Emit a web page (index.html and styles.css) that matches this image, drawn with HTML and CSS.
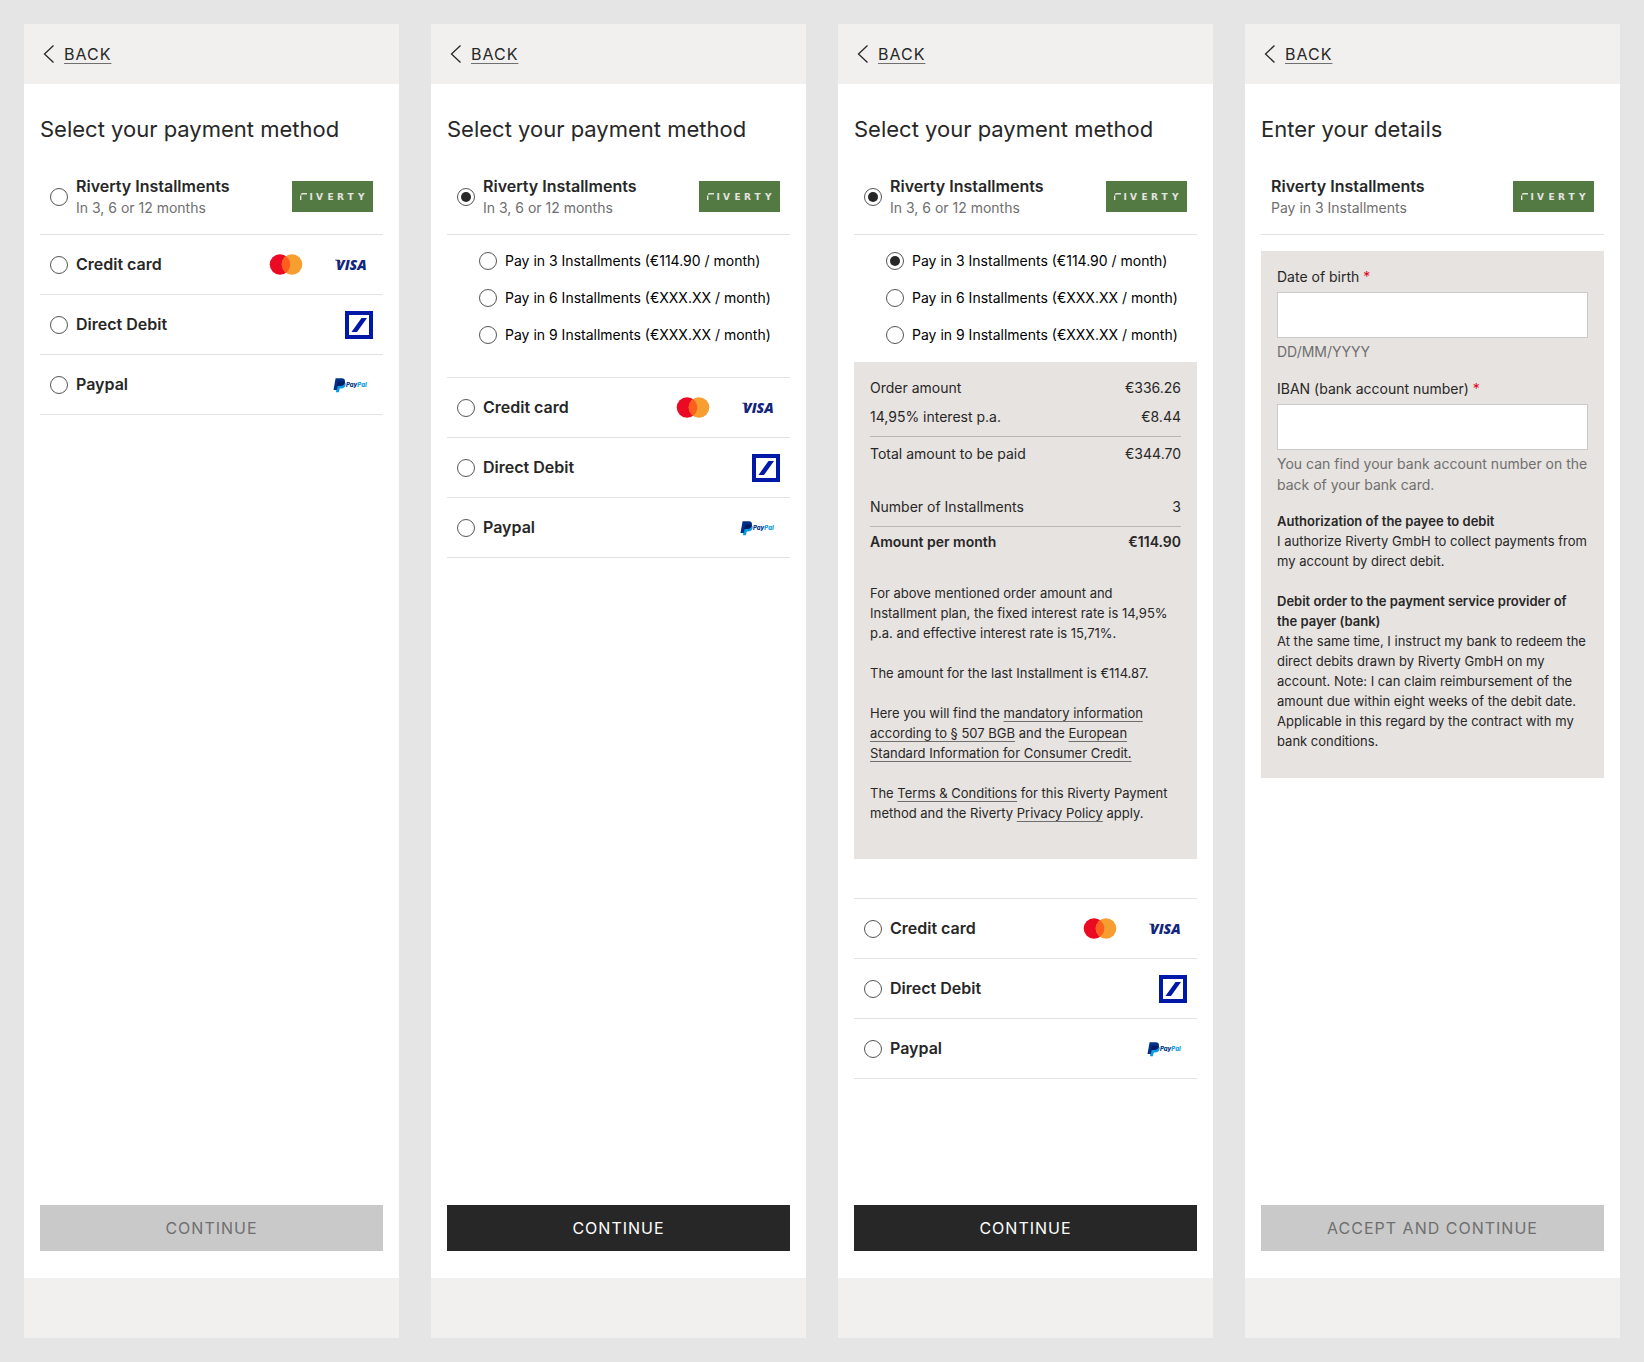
FILE: index.html
```html
<!DOCTYPE html>
<html lang="en">
<head>
    <meta charset="UTF-8">
    <meta name="viewport" content="width=device-width, initial-scale=1.0">
    <title>Riverty Installments</title>
    <link rel="stylesheet" href="styles.css">
</head>
<body>
    <!-- logos shared by all screens -->
    <svg class="sprite" aria-hidden="true">
        <symbol id="riverty" viewBox="0 0 81 31">
            <rect width="81" height="31" fill="#527a42"/>
            <path d="M8.700 19v-4.500M9 13.500L10.300 12.700H15" fill="none" stroke="#e7e3e0" stroke-width="1.400"/>
            <text class="riverty-text" x="17.500 24 35.500 45 55.500 66" y="19">IVERTY</text>
        </symbol>
        <symbol id="mastercard" viewBox="0 0 45 30">
            <circle cx="17" cy="14.500" r="10.300" fill="#eb0a23"/>
            <circle cx="29" cy="14.500" r="10.300" fill="#f79e31"/>
            <path d="M23 6.130a10.300 10.300 0 0 1 0 16.740a10.300 10.300 0 0 1 0-16.740z" fill="#ff5f1e"/>
        </symbol>
        <symbol id="visa" viewBox="0 0 45 30">
            <path d="M7 9.800h4.500l1.500 4C11.500 11.800 9.500 10.600 7 10.200z" fill="#171c55"/>
            <text class="visa-text" x="8" y="20">VISA</text>
        </symbol>
        <symbol id="db" viewBox="0 0 28 28">
            <rect x="2" y="2" width="24" height="24" fill="#fff" stroke="#0018a8" stroke-width="4"/>
            <path d="M6.500 21h5.500l10-14h-5.500z" fill="#0018a8"/>
        </symbol>
        <symbol id="paypal" viewBox="0 0 45 30">
            <path d="M9 11.500h5.500c2.500 0 3.500 1.500 3 3.700c-.5 2.400-2.200 3.300-4.500 3.300h-1.300l-.8 3.700H8z" fill="#0a9be0"/>
            <path d="M7.600 8.200h6c2.600 0 3.800 1.500 3.300 3.900c-.6 2.700-2.300 3.900-4.900 3.900H9.700l-.9 4H5.500z" fill="#003087"/>
            <path d="M9.900 11.500h4.600c1.200 0 1.900.3 2.400.8c-.6 2.600-2.300 3.700-4.900 3.700H9z" fill="#001c64"/>
            <text class="paypal-text" x="18" y="17" fill="#003087">Pay<tspan fill="#0a9be0">Pal</tspan></text>
        </symbol>
    </svg>

    <main class="screens">
        <!-- 1: nothing selected -->
        <section class="screen">
            <header class="top-bar">
                <a class="back" href="#">
                    <svg class="back-icon" viewBox="0 0 12 20" aria-hidden="true"><path d="M10.500 1.500L1.500 10L10.500 18.500"/></svg>
                    <span class="back-text">BACK</span>
                </a>
            </header>
            <form class="content">
                <h1 class="title">Select your payment method</h1>
                <label class="method method-main">
                    <input class="radio" type="radio" name="m1">
                    <span class="method-text">
                        <span class="method-name">Riverty Installments</span>
                        <span class="method-sub">In 3, 6 or 12 months</span>
                    </span>
                    <svg class="logo-riverty" role="img" aria-label="Riverty"><use href="#riverty"/></svg>
                </label>
                <label class="method">
                    <input class="radio" type="radio" name="m1">
                    <span class="method-name">Credit card</span>
                    <span class="logos">
                        <svg class="logo" role="img" aria-label="Mastercard"><use href="#mastercard"/></svg>
                        <svg class="logo" role="img" aria-label="Visa"><use href="#visa"/></svg>
                    </span>
                </label>
                <label class="method">
                    <input class="radio" type="radio" name="m1">
                    <span class="method-name">Direct Debit</span>
                    <svg class="logo-db" role="img" aria-label="Deutsche Bank"><use href="#db"/></svg>
                </label>
                <label class="method">
                    <input class="radio" type="radio" name="m1">
                    <span class="method-name">Paypal</span>
                    <svg class="logo" role="img" aria-label="PayPal"><use href="#paypal"/></svg>
                </label>
                <button class="btn" type="submit" disabled>CONTINUE</button>
            </form>
            <footer class="bottom-bar"></footer>
        </section>

        <!-- 2: Riverty selected -->
        <section class="screen">
            <header class="top-bar">
                <a class="back" href="#">
                    <svg class="back-icon" viewBox="0 0 12 20" aria-hidden="true"><path d="M10.500 1.500L1.500 10L10.500 18.500"/></svg>
                    <span class="back-text">BACK</span>
                </a>
            </header>
            <form class="content">
                <h1 class="title">Select your payment method</h1>
                <label class="method method-main">
                    <input class="radio" type="radio" name="m2" checked>
                    <span class="method-text">
                        <span class="method-name">Riverty Installments</span>
                        <span class="method-sub">In 3, 6 or 12 months</span>
                    </span>
                    <svg class="logo-riverty" role="img" aria-label="Riverty"><use href="#riverty"/></svg>
                </label>
                <div class="plans">
                    <label class="plan"><input class="radio" type="radio" name="p2"> Pay in 3 Installments (€114.90 / month)</label>
                    <label class="plan"><input class="radio" type="radio" name="p2"> Pay in 6 Installments (€XXX.XX / month)</label>
                    <label class="plan"><input class="radio" type="radio" name="p2"> Pay in 9 Installments (€XXX.XX / month)</label>
                </div>
                <div class="others">
                    <label class="method">
                        <input class="radio" type="radio" name="m2">
                        <span class="method-name">Credit card</span>
                        <span class="logos">
                            <svg class="logo" role="img" aria-label="Mastercard"><use href="#mastercard"/></svg>
                            <svg class="logo" role="img" aria-label="Visa"><use href="#visa"/></svg>
                        </span>
                    </label>
                    <label class="method">
                        <input class="radio" type="radio" name="m2">
                        <span class="method-name">Direct Debit</span>
                        <svg class="logo-db" role="img" aria-label="Deutsche Bank"><use href="#db"/></svg>
                    </label>
                    <label class="method">
                        <input class="radio" type="radio" name="m2">
                        <span class="method-name">Paypal</span>
                        <svg class="logo" role="img" aria-label="PayPal"><use href="#paypal"/></svg>
                    </label>
                </div>
                <button class="btn" type="submit">CONTINUE</button>
            </form>
            <footer class="bottom-bar"></footer>
        </section>

        <!-- 3: plan selected -->
        <section class="screen">
            <header class="top-bar">
                <a class="back" href="#">
                    <svg class="back-icon" viewBox="0 0 12 20" aria-hidden="true"><path d="M10.500 1.500L1.500 10L10.500 18.500"/></svg>
                    <span class="back-text">BACK</span>
                </a>
            </header>
            <form class="content">
                <h1 class="title">Select your payment method</h1>
                <label class="method method-main">
                    <input class="radio" type="radio" name="m3" checked>
                    <span class="method-text">
                        <span class="method-name">Riverty Installments</span>
                        <span class="method-sub">In 3, 6 or 12 months</span>
                    </span>
                    <svg class="logo-riverty" role="img" aria-label="Riverty"><use href="#riverty"/></svg>
                </label>
                <div class="plans">
                    <label class="plan"><input class="radio" type="radio" name="p3" checked> Pay in 3 Installments (€114.90 / month)</label>
                    <label class="plan"><input class="radio" type="radio" name="p3"> Pay in 6 Installments (€XXX.XX / month)</label>
                    <label class="plan"><input class="radio" type="radio" name="p3"> Pay in 9 Installments (€XXX.XX / month)</label>
                </div>
                <div class="box box-summary">
                    <table class="summary">
                        <tr><th scope="row">Order amount</th><td>€336.26</td></tr>
                        <tr class="line"><th scope="row">14,95% interest p.a.</th><td>€8.44</td></tr>
                        <tr class="sum"><th scope="row">Total amount to be paid</th><td>€344.70</td></tr>
                        <tr class="line"><th scope="row">Number of Installments</th><td>3</td></tr>
                        <tr class="monthly"><th scope="row">Amount per month</th><td>€114.90</td></tr>
                    </table>
                    <div class="legal">
                        <p>For above mentioned order amount and Installment plan, the fixed interest rate is 14,95% p.a. and effective interest rate is 15,71%.</p>
                        <p>The amount for the last Installment is €114.87.</p>
                        <p>Here you will find the <a href="#">mandatory information according to § 507 BGB</a> and the <a href="#">European Standard Information for Consumer Credit.</a></p>
                        <p>The <a href="#">Terms &amp; Conditions</a> for this Riverty Payment method and the Riverty <a href="#">Privacy Policy</a> apply.</p>
                    </div>
                </div>
                <div class="others others-far">
                    <label class="method">
                        <input class="radio" type="radio" name="m3">
                        <span class="method-name">Credit card</span>
                        <span class="logos">
                            <svg class="logo" role="img" aria-label="Mastercard"><use href="#mastercard"/></svg>
                            <svg class="logo" role="img" aria-label="Visa"><use href="#visa"/></svg>
                        </span>
                    </label>
                    <label class="method">
                        <input class="radio" type="radio" name="m3">
                        <span class="method-name">Direct Debit</span>
                        <svg class="logo-db" role="img" aria-label="Deutsche Bank"><use href="#db"/></svg>
                    </label>
                    <label class="method">
                        <input class="radio" type="radio" name="m3">
                        <span class="method-name">Paypal</span>
                        <svg class="logo" role="img" aria-label="PayPal"><use href="#paypal"/></svg>
                    </label>
                </div>
                <button class="btn" type="submit">CONTINUE</button>
            </form>
            <footer class="bottom-bar"></footer>
        </section>

        <!-- 4: customer details -->
        <section class="screen">
            <header class="top-bar">
                <a class="back" href="#">
                    <svg class="back-icon" viewBox="0 0 12 20" aria-hidden="true"><path d="M10.500 1.500L1.500 10L10.500 18.500"/></svg>
                    <span class="back-text">BACK</span>
                </a>
            </header>
            <form class="content">
                <h1 class="title">Enter your details</h1>
                <div class="method method-main">
                    <span class="method-text">
                        <span class="method-name">Riverty Installments</span>
                        <span class="method-sub">Pay in 3 Installments</span>
                    </span>
                    <svg class="logo-riverty" role="img" aria-label="Riverty"><use href="#riverty"/></svg>
                </div>
                <div class="box box-details">
                    <div class="field">
                        <label for="birth">Date of birth <span class="required">*</span></label>
                        <input class="field-input" id="birth" type="text">
                        <div class="hint">DD/MM/YYYY</div>
                    </div>
                    <div class="field">
                        <label for="iban">IBAN (bank account number) <span class="required">*</span></label>
                        <input class="field-input" id="iban" type="text">
                        <div class="hint">You can find your bank account number on the back of your bank card.</div>
                    </div>
                    <div class="legal">
                        <p><strong>Authorization of the payee to debit</strong><br>I authorize Riverty GmbH to collect payments from my account by direct debit.</p>
                        <p><strong>Debit order to the payment service provider of the payer (bank)</strong><br>At the same time, I instruct my bank to redeem the direct debits drawn by Riverty GmbH on my account. Note: I can claim reimbursement of the amount due within eight weeks of the debit date. Applicable in this regard by the contract with my bank conditions.</p>
                    </div>
                </div>
                <button class="btn" type="submit" disabled>ACCEPT AND CONTINUE</button>
            </form>
            <footer class="bottom-bar"></footer>
        </section>
    </main>
</body>
</html>
```
FILE: styles.css
```css
* {
    box-sizing: border-box;
}
body {
    margin: 0;
    font-family: Inter, "Liberation Sans", sans-serif;
    font-size: 14px;
    line-height: 21px;
    color: #272727;
    background: #e5e5e5;
}
.sprite {
    display: none;
}
.screens {
    display: grid;
    grid-template-columns: repeat(auto-fit, minmax(340px, 1fr));
    gap: 32px;
    min-height: 100vh;
    padding: 24px;
}
.screen {
    display: flex;
    flex-direction: column;
    background: #fff;
}
.top-bar {
    display: flex;
    align-items: center;
    height: 60px;
    padding: 0 19px;
    background: #f1f0ee;
}
.back {
    display: flex;
    align-items: center;
    gap: 9px;
    color: #272727;
    font-size: 16px;
    text-decoration: none;
}
.back-icon {
    width: 12px;
    height: 20px;
    fill: none;
    stroke: #272727;
    stroke-width: 1.3;
}
.back-text {
    letter-spacing: 1px;
    text-decoration: underline 1px #6f6f6f;
    text-underline-offset: 3px;
}
.bottom-bar {
    height: 60px;
    background: #f1f0ee;
}
.content {
    flex: 1;
    display: flex;
    flex-direction: column;
    padding: 32px 16px 27px;
}
.title {
    margin: 0 0 17px;
    font-size: 22px;
    font-weight: 400;
    line-height: 26px;
}

/* payment methods */
.method {
    display: flex;
    align-items: center;
    gap: 8px;
    height: 60px;
    padding: 0 10px;
    border-bottom: 1px solid #e3e3e3;
}
.method-main {
    height: 76px;
}
.method-text {
    flex: 1;
    display: flex;
    flex-direction: column;
}
.method-name {
    flex: 1;
    font-size: 16px;
    font-weight: 600;
}
.method-sub {
    color: #6f6f6f;
}
.radio {
    appearance: none;
    display: flex;
    align-items: center;
    justify-content: center;
    flex: none;
    width: 18px;
    height: 18px;
    margin: 0;
    border: 1px solid #555;
    border-radius: 50%;
    background: #fff;
}
.radio:checked::before {
    content: "";
    width: 10px;
    height: 10px;
    border-radius: 50%;
    background: #272727;
}
.plans {
    display: flex;
    flex-direction: column;
    gap: 16px;
    padding: 15px 0 17px 32px;
    color: #000;
}
.plan {
    display: flex;
    align-items: center;
    gap: 8px;
}
.others {
    margin-top: 15px;
    border-top: 1px solid #e3e3e3;
}
.others-far {
    margin-top: 39px;
}

/* logos */
.logos {
    display: flex;
    gap: 20px;
}
.logo {
    width: 45px;
    height: 30px;
}
.logo-riverty {
    width: 81px;
    height: 31px;
}
.logo-db {
    width: 28px;
    height: 28px;
}
.riverty-text {
    font: bold 9px "DejaVu Sans", sans-serif;
    fill: #e7e3e0;
}
.visa-text {
    font: italic 800 14px "Open Sans", sans-serif;
    fill: #11267c;
}
.paypal-text {
    font: italic 800 6px Inter, sans-serif;
}

/* grey boxes */
.box {
    padding: 15px 16px;
    background: #e7e3e0;
}
.box-summary {
    padding-bottom: 36px;
}
.box-details {
    margin-top: 16px;
    padding-bottom: 27px;
}
.summary {
    width: 100%;
    margin-bottom: 31px;
    border-collapse: separate;
    border-spacing: 0;
}
.summary th,
.summary td {
    padding: 0 0 8px;
    font-weight: 400;
    text-align: left;
}
.summary td {
    text-align: right;
}
.summary .line th,
.summary .line td {
    padding-bottom: 9px;
    border-bottom: 1px solid #b9b6b4;
}
.summary .sum th,
.summary .sum td {
    padding: 6px 0 32px;
}
.summary .monthly th,
.summary .monthly td {
    padding: 4px 0 0;
    font-weight: 600;
}
.legal {
    font-size: 13px;
    line-height: 20px;
}
.legal p {
    margin: 0 0 20px;
}
.legal p:last-child {
    margin-bottom: 0;
}
.legal strong {
    font-weight: 600;
}
.legal a {
    color: #272727;
    text-decoration-color: #6f6f6f;
    text-decoration-thickness: 1px;
    text-decoration-skip-ink: none;
    text-underline-offset: 3px;
}
.field {
    display: flex;
    flex-direction: column;
    margin-bottom: 16px;
}
.field-input {
    width: 100%;
    height: 46px;
    margin: 5px 0 3px;
    padding: 0 12px;
    border: 1px solid #c9c9c9;
    border-radius: 0;
    font: inherit;
    background: #fff;
}
.required {
    color: #e3001b;
}
.hint {
    color: #6f6f6f;
}

.btn {
    height: 46px;
    margin-top: auto;
    border: none;
    font-family: inherit;
    font-size: 16px;
    letter-spacing: 1px;
    color: #fff;
    background: #272727;
}
.btn:disabled {
    color: #6f6f6f;
    background: #c9c9c9;
}
```
